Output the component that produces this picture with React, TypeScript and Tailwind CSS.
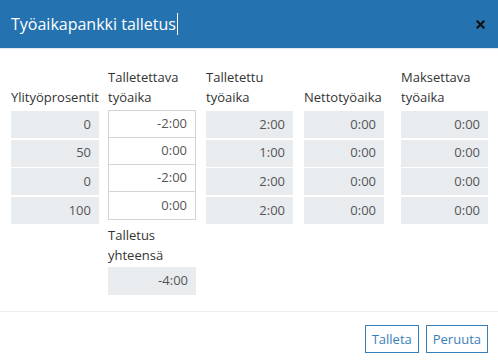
import React from "react";

const font = { fontFamily: '"Open Sans", "Noto Sans", sans-serif' };

type Col = { label: string[]; values: string[]; input?: boolean; w: string; ml: string };

const cols: Col[] = [
  { label: ["Ylityöprosentit"], values: ["0", "50", "0", "100"], w: "w-[88px]", ml: "ml-0" },
  { label: ["Talletettava", "työaika"], values: ["-2:00", "0:00", "-2:00", "0:00"], input: true, w: "w-[88px]", ml: "ml-[9px]" },
  { label: ["Talletettu", "työaika"], values: ["2:00", "1:00", "2:00", "2:00"], w: "w-[87px]", ml: "ml-[10px]" },
  { label: ["Nettotyöaika"], values: ["0:00", "0:00", "0:00", "0:00"], w: "w-[80px]", ml: "ml-[11px]" },
  { label: ["Maksettava", "työaika"], values: ["0:00", "0:00", "0:00", "0:00"], w: "w-[87px]", ml: "ml-[17px]" },
];

function Label({ lines }: { lines: string[] }) {
  return (
    <div className="h-[40px] flex flex-col justify-end text-[13px] leading-[20px] text-[#333] whitespace-nowrap">
      {lines.map((l) => (
        <div key={l}>{l}</div>
      ))}
    </div>
  );
}

export default function App() {
  return (
    <div className="w-[498px] h-[362px] bg-white overflow-hidden" style={font}>
      <div className="h-[49px] bg-[#2472b0] border-b border-[#dfe6ee] flex items-center pl-[11px] pr-[13px]">
        <div className="text-white text-[16px] leading-[24px] flex items-center">
          <span>Työaikapankki talletus</span>
          <span className="w-px h-[22px] bg-white ml-px" />
        </div>
        <div className="ml-auto flex items-center">
          <svg width="9" height="9" viewBox="0 0 9 9">
            <path d="M1.5 1.5 L7.5 7.5 M7.5 1.5 L1.5 7.5" stroke="#111" strokeWidth="2.2" strokeLinecap="square" />
          </svg>
        </div>
      </div>

      <div className="pt-[18px] pl-[11px] h-[263px] border-b border-[#eeeeee]">
        <div className="flex">
          {cols.map((c) => (
            <div key={c.label.join(" ")} className={`${c.w} ${c.ml} flex flex-col`}>
              <Label lines={c.label} />
              <div className="mt-[3px]">
                {c.input ? (
                  <div className="border border-[#d4d4d4] divide-y divide-[#d4d4d4] bg-white">
                    {c.values.map((v, i) => (
                      <div key={i} className="h-[27px] flex items-center justify-end pr-[8px] text-[13px] text-[#555]">
                        {v}
                      </div>
                    ))}
                  </div>
                ) : (
                  <div className="flex flex-col gap-[1.6px] pt-px">
                    {c.values.map((v, i) => (
                      <div key={i} className="h-[27px] bg-[#e9ecef] flex items-center justify-end pr-[8px] text-[13px] text-[#555]">
                        {v}
                      </div>
                    ))}
                  </div>
                )}
              </div>
              {c.input && (
                <div className="mt-[5px]">
                  <Label lines={["Talletus", "yhteensä"]} />
                  <div className="mt-[2px] h-[28px] bg-[#e9ecef] flex items-center justify-end pr-[8px] text-[13px] text-[#555]">
                    -4:00
                  </div>
                </div>
              )}
            </div>
          ))}
        </div>
      </div>

      <div className="flex justify-end gap-[7px] pr-[10px] pt-[13px]">
        <button className="h-[28px] px-[6px] border-[1.5px] border-[#3a7fb8] text-[#3a7fb8] text-[13px] leading-none bg-white">
          Talleta
        </button>
        <button className="h-[28px] px-[6px] border-[1.5px] border-[#3a7fb8] text-[#3a7fb8] text-[13px] leading-none bg-white">
          Peruuta
        </button>
      </div>
    </div>
  );
}
